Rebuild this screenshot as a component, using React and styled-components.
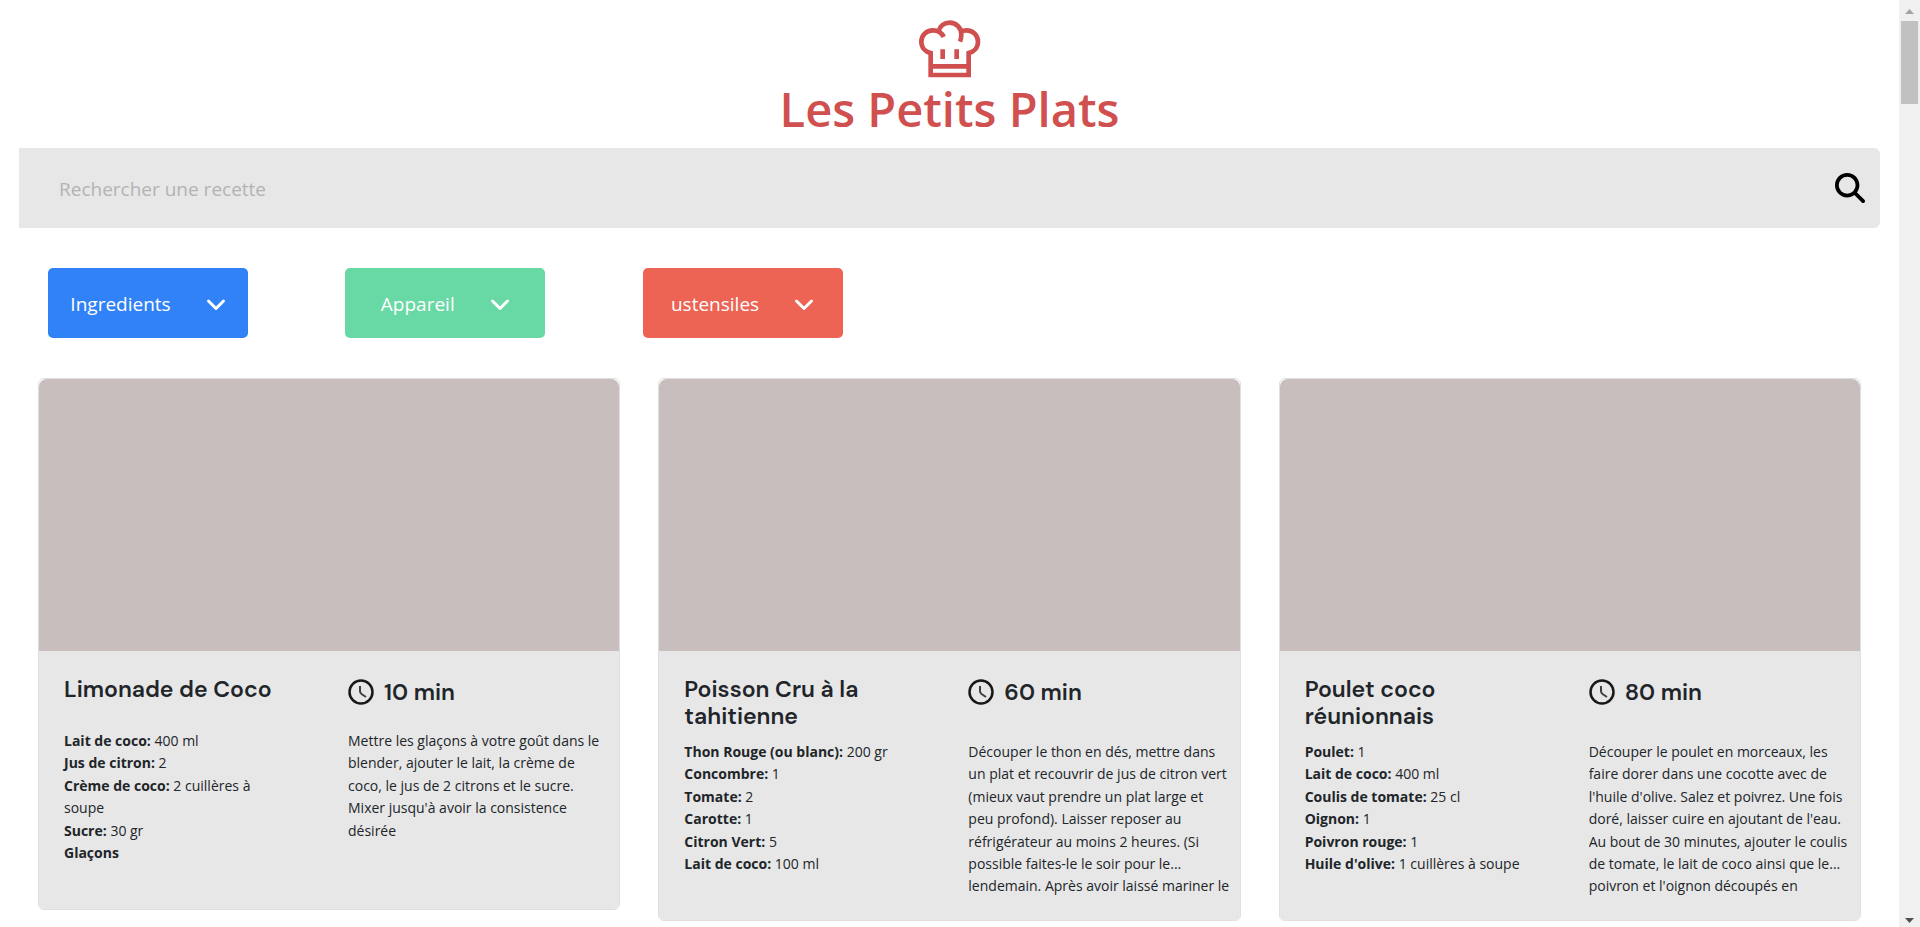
import React, { useState } from "react";
import styled, { createGlobalStyle } from "styled-components";
import { FaMagnifyingGlass } from "react-icons/fa6";

const filters = [
  { name: "Ingredients", color: "#3282f7" },
  { name: "Appareil", color: "#68d9a4" },
  { name: "ustensiles", color: "#ed6454" },
];

const recipes = [
  {
    name: "Limonade de Coco",
    time: 10,
    ingredients: [
      ["Lait de coco", "400 ml"],
      ["Jus de citron", "2"],
      ["Crème de coco", "2 cuillères à soupe"],
      ["Sucre", "30 gr"],
      ["Glaçons"],
    ],
    description: `Mettre les glaçons à votre goût dans le
blender, ajouter le lait, la crème de
coco, le jus de 2 citrons et le sucre.
Mixer jusqu'à avoir la consistence
désirée`,
  },
  {
    name: "Poisson Cru à la tahitienne",
    time: 60,
    ingredients: [
      ["Thon Rouge (ou blanc)", "200 gr"],
      ["Concombre", "1"],
      ["Tomate", "2"],
      ["Carotte", "1"],
      ["Citron Vert", "5"],
      ["Lait de coco", "100 ml"],
    ],
    description: `Découper le thon en dés, mettre dans
un plat et recouvrir de jus de citron vert
(mieux vaut prendre un plat large et
peu profond). Laisser reposer au
réfrigérateur au moins 2 heures. (Si
possible faites-le le soir pour le...
lendemain. Après avoir laissé mariner le`,
  },
  {
    name: "Poulet coco réunionnais",
    time: 80,
    ingredients: [
      ["Poulet", "1"],
      ["Lait de coco", "400 ml"],
      ["Coulis de tomate", "25 cl"],
      ["Oignon", "1"],
      ["Poivron rouge", "1"],
      ["Huile d'olive", "1 cuillères à soupe"],
    ],
    description: `Découper le poulet en morceaux, les
faire dorer dans une cocotte avec de
l'huile d'olive. Salez et poivrez. Une fois
doré, laisser cuire en ajoutant de l'eau.
Au bout de 30 minutes, ajouter le coulis
de tomate, le lait de coco ainsi que le...
poivron et l'oignon découpés en`,
  },
];

function ChefHat() {
  return (
    <svg
      width="64"
      height="60"
      viewBox="54 26 192 180"
      fill="none"
      stroke="#d04f4f"
      strokeWidth="14"
      aria-hidden="true"
    >
      <path d="M131 80C126 68 113 60 98 60C79 60 64 75 64 94C64 111 75 124 92 128V194H206V128C223 124 234 111 234 94C234 75 219 60 200 60C196 60 192 61 187 62" />
      <path d="M116 62C120 47 133 37 149 37C168 37 184 52 184 72C184 80 183 87 180 94" />
      <path d="M92 168H206M128 117V146M170 117V146" />
    </svg>
  );
}

function Chevron() {
  return (
    <svg
      width="20"
      height="20"
      viewBox="0 0 20 20"
      fill="none"
      stroke="#fff"
      strokeWidth="3"
      strokeLinecap="round"
      strokeLinejoin="round"
      aria-hidden="true"
    >
      <path d="M2.500 7L10 14.500L17.500 7" />
    </svg>
  );
}

function Clock() {
  return (
    <svg width="26" height="26" viewBox="0 0 26 26" fill="none" aria-hidden="true">
      <circle cx="13" cy="13" r="11.500" stroke="#16181a" strokeWidth="2.500" />
      <path d="M12 7V12Q12 14 13.500 15L18 18" stroke="#3c3f42" strokeWidth="2" />
    </svg>
  );
}

function RecipeCard({ recipe }) {
  return (
    <Card>
      <CardImage />
      <CardBody>
        <CardTitle>{recipe.name}</CardTitle>
        <Time>
          <Clock />
          <span>{recipe.time} min</span>
        </Time>
        <IngredientList>
          {recipe.ingredients.map(([name, quantity]) => (
            <li key={name}>
              <b>{quantity ? `${name}:` : name}</b> {quantity}
            </li>
          ))}
        </IngredientList>
        <Description>{recipe.description}</Description>
      </CardBody>
    </Card>
  );
}

export default function App() {
  const [search, setSearch] = useState("");

  return (
    <Page>
      <GlobalStyle />
      <Content>
        <Header>
          <ChefHat />
          <Title>Les Petits Plats</Title>
        </Header>

        <SearchBar role="search" onSubmit={(e) => e.preventDefault()}>
          <SearchInput
            type="text"
            aria-label="Rechercher une recette"
            placeholder="Rechercher une recette"
            value={search}
            onChange={(e) => setSearch(e.target.value)}
          />
          <SearchButton type="submit" aria-label="Rechercher">
            <FaMagnifyingGlass size={30} />
          </SearchButton>
        </SearchBar>

        <Filters>
          {filters.map((filter) => (
            <FilterButton key={filter.name} type="button" $color={filter.color}>
              {filter.name}
              <Chevron />
            </FilterButton>
          ))}
        </Filters>

        <Recipes>
          {recipes.map((recipe) => (
            <RecipeCard key={recipe.name} recipe={recipe} />
          ))}
        </Recipes>
      </Content>

      <Scrollbar aria-hidden="true">
        <Arrow viewBox="0 0 9 5" fill="#a3a3a3">
          <path d="M0 5L4.500 0L9 5Z" />
        </Arrow>
        <Thumb />
        <Arrow viewBox="0 0 9 5" fill="#505050">
          <path d="M0 0H9L4.500 5Z" />
        </Arrow>
      </Scrollbar>
    </Page>
  );
}

const GlobalStyle = createGlobalStyle`
  * {
    box-sizing: border-box;
  }

  body {
    margin: 0;
    background: #fff;
    color: #212529;
    font-family: "Segoe UI", "Open Sans", sans-serif;
  }
`;

const Page = styled.div`
  display: flex;
  align-items: flex-start;
`;

const Content = styled.main`
  flex: 1;
  min-width: 0;
  padding: 0 19px;
`;

const Header = styled.header`
  display: flex;
  flex-direction: column;
  align-items: center;
  padding-top: 19px;
`;

const Title = styled.h1`
  margin: 0 0 9px;
  color: #d04f4f;
  font-size: 47px;
  font-weight: 600;
  line-height: 60px;
`;

const SearchBar = styled.form`
  display: flex;
  align-items: center;
  height: 80px;
  padding-right: 15px;
  background: #e7e7e7;
  border-radius: 0 6px 6px 0;
`;

const SearchInput = styled.input`
  flex: 1;
  min-width: 0;
  height: 100%;
  padding: 2px 40px 0;
  border: 0;
  background: none;
  font-family: inherit;
  font-size: 19px;

  &::placeholder {
    color: #b3b3b3;
  }
`;

const SearchButton = styled.button`
  display: flex;
  padding: 0;
  border: 0;
  background: none;
  color: #000;
`;

const Filters = styled.div`
  display: grid;
  grid-template-columns: repeat(3, 16%);
  padding: 40px 0 40px 29px;
  margin-right: -26px;
`;

const FilterButton = styled.button`
  display: flex;
  align-items: center;
  justify-content: center;
  gap: 35px;
  width: 200px;
  height: 70px;
  padding: 2px 0 0;
  border: 0;
  border-radius: 5px;
  background: ${({ $color }) => $color};
  color: #fff;
  font-family: inherit;
  font-size: 19px;
`;

const Recipes = styled.section`
  display: grid;
  grid-template-columns: repeat(3, 1fr);
  align-items: start;
  gap: 38px;
  padding: 0 19px;
`;

const Card = styled.article`
  border: 1px solid #dfdfdf;
  border-radius: 6px;
  overflow: hidden;
`;

const CardImage = styled.div`
  height: 272px;
  border-radius: 8px 8px 0 0;
  background: #c8bebe;
`;

const CardBody = styled.div`
  display: grid;
  grid-template-columns: 260px 1fr;
  column-gap: 24px;
  row-gap: 11px;
  padding: 25px 0 21px 25px;
  background: #e7e7e7;
`;

const CardTitle = styled.h2`
  width: 220px;
  min-height: 43px;
  margin: 0;
  font-family: "DM Sans", Inter, sans-serif;
  font-size: 23px;
  font-weight: 600;
  line-height: 27px;
`;

const Time = styled.div`
  display: flex;
  align-items: center;
  align-self: start;
  gap: 10px;
  padding-top: 3px;
  font-family: "DM Sans", Inter, sans-serif;
  font-size: 23px;
  font-weight: 600;
  line-height: 26px;
`;

const IngredientList = styled.ul`
  width: 230px;
  margin: 0;
  padding: 0;
  list-style: none;
  font-size: 14px;
  line-height: 1.6;
`;

const Description = styled.p`
  height: 158px;
  margin: 0;
  overflow: hidden;
  white-space: pre-line;
  font-size: 14px;
  line-height: 1.6;
`;

const Scrollbar = styled.div`
  position: sticky;
  top: 0;
  display: flex;
  flex-direction: column;
  align-items: center;
  width: 21px;
  height: 100vh;
  padding: 9px 0 4px;
  background: #f0f0f0;
`;

const Arrow = styled.svg`
  width: 9px;
  height: 5px;
`;

const Thumb = styled.div`
  width: 17px;
  height: 83px;
  margin: 7px 0 auto;
  background: #c1c1c1;
`;
